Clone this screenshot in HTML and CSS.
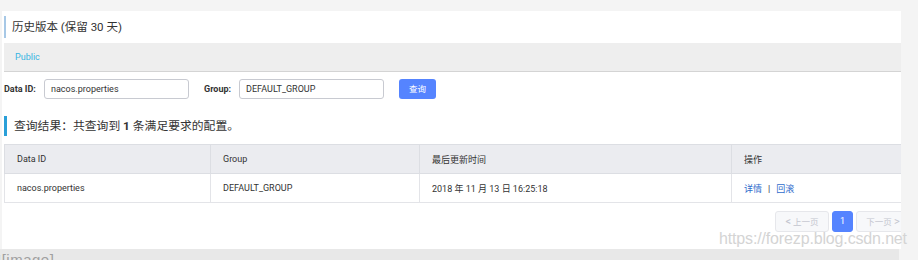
FILE: index.html
```html
<!DOCTYPE html>
<html lang="zh-CN">
<head>
<meta charset="utf-8">
<title>历史版本</title>
<link rel="stylesheet" href="styles.css">
</head>
<body>
<div class="page">
  <div class="panel">
    <div class="title">历史版本 (保留 30 天)</div>
    <div class="ns-bar">Public</div>
    <div class="search">
      <span class="label label-id">Data ID:</span>
      <div class="input">nacos.properties</div>
      <span class="label label-group">Group:</span>
      <div class="input">DEFAULT_GROUP</div>
      <div class="btn">查询</div>
    </div>
    <div class="result-title">查询结果：共查询到 <b>1</b> 条满足要求的配置。</div>
    <table class="grid">
      <colgroup>
        <col class="c1"><col class="c2"><col class="c3"><col class="c4">
      </colgroup>
      <thead>
        <tr><th>Data ID</th><th>Group</th><th>最后更新时间</th><th>操作</th></tr>
      </thead>
      <tbody>
        <tr>
          <td>nacos.properties</td>
          <td>DEFAULT_GROUP</td>
          <td>2018 年 11 月 13 日 16:25:18</td>
          <td><a class="link">详情</a><span class="sep">|</span><a class="link">回滚</a></td>
        </tr>
      </tbody>
    </table>
    <div class="pager">
      <div class="pg pg-prev"><span class="arr">&lt;</span> 上一页</div>
      <div class="pg pg-cur">1</div>
      <div class="pg pg-next">下一页 <span class="arr">&gt;</span></div>
    </div>
  </div>
  <div class="below">![image]</div>
  <div class="watermark">https://forezp.blog.csdn.net</div>
</div>
</body>
</html>
```
FILE: styles.css
```css
html, body {
  margin: 0;
  padding: 0;
}
body {
  background: #f4f4f4;
  font-family: Roboto, "Noto Sans CJK SC", sans-serif;
  color: #333;
  overflow: hidden;
  height: 260px;
}
.page {
  position: relative;
  padding-top: 11px;
  width: 918px;
}
.panel {
  margin-left: 2px;
  width: 899px;
  height: 238px;
  background: #fff;
  overflow: hidden;
  padding-left: 2px;
  box-sizing: border-box;
}
.title {
  margin-top: 5px;
  height: 22px;
  line-height: 22px;
  border-left: 2px solid #a7c8e6;
  padding-left: 6px;
  font-size: 11.5px;
  color: #333;
}
.ns-bar {
  margin-top: 5px;
  height: 28px;
  line-height: 28px;
  background: #eeeeee;
  border-bottom: 1px solid #d4d4d4;
  padding-left: 11px;
  font-size: 9px;
  color: #37b4e2;
}
.search {
  margin-top: 7px;
  display: flex;
  align-items: center;
  height: 20px;
}
.label {
  font-size: 9px;
  font-weight: bold;
  color: #333;
}
.label-id {
  width: 40px;
}
.label-group {
  margin-left: 15px;
  width: 35px;
}
.input {
  width: 145px;
  height: 20px;
  box-sizing: border-box;
  border: 1px solid #c8cad1;
  border-radius: 3px;
  padding-left: 6px;
  font-size: 9px;
  line-height: 18px;
  color: #333;
}
.btn {
  margin-left: 15px;
  width: 37px;
  height: 20px;
  line-height: 20px;
  text-align: center;
  background: #5584ff;
  border-radius: 3px;
  color: #fff;
  font-size: 8.5px;
}
.result-title {
  margin-top: 17px;
  height: 20px;
  line-height: 20px;
  border-left: 3px solid #2a9fd8;
  padding-left: 7px;
  font-size: 11.8px;
  color: #333;
}
.result-title b {
  font-weight: bold;
}
.grid {
  margin-top: 8px;
  width: 904px;
  border-collapse: collapse;
  table-layout: fixed;
  font-size: 9px;
  color: #333;
}
.c1 { width: 206px; }
.c2 { width: 209px; }
.c3 { width: 312px; }
.c4 { width: 177px; }
.grid th, .grid td {
  height: 28px;
  padding: 0 0 0 12px;
  text-align: left;
  border: 1px solid #e3e4e8;
  font-weight: normal;
  white-space: nowrap;
}
.grid th {
  background: #ebecf0;
  border-color: #dcdee3;
}
.link {
  color: #2f6ccc;
}
.sep {
  margin: 0 6px;
  color: #333;
}
.pager {
  margin-top: 8px;
  margin-right: -9px;
  display: flex;
  justify-content: flex-end;
  gap: 3px;
}
.pg {
  height: 21px;
  line-height: 19px;
  box-sizing: border-box;
  border: 1px solid #e6e7eb;
  border-radius: 3px;
  background: #f7f8fa;
  color: #c4c6cf;
  font-size: 8.5px;
  text-align: center;
}
.pg-prev, .pg-next {
  width: 54px;
}
.pg-cur {
  width: 21px;
  background: #5584ff;
  border-color: #5584ff;
  color: #fff;
  font-size: 9px;
}
.arr {
  font-size: 11px;
}
.below {
  width: 899px;
  height: 20px;
  background: #e8e8e8;
  color: #a0a0a0;
  font-family: "Liberation Sans", sans-serif;
  font-size: 15px;
  letter-spacing: 0.5px;
  line-height: 20px;
  text-indent: -3px;
  padding-top: 1px;
}
.watermark {
  position: absolute;
  left: 719px;
  top: 230px;
  font-family: "Liberation Sans", sans-serif;
  font-size: 16px;
  letter-spacing: -0.15px;
  color: #d4d4d4;
  white-space: nowrap;
}
```
